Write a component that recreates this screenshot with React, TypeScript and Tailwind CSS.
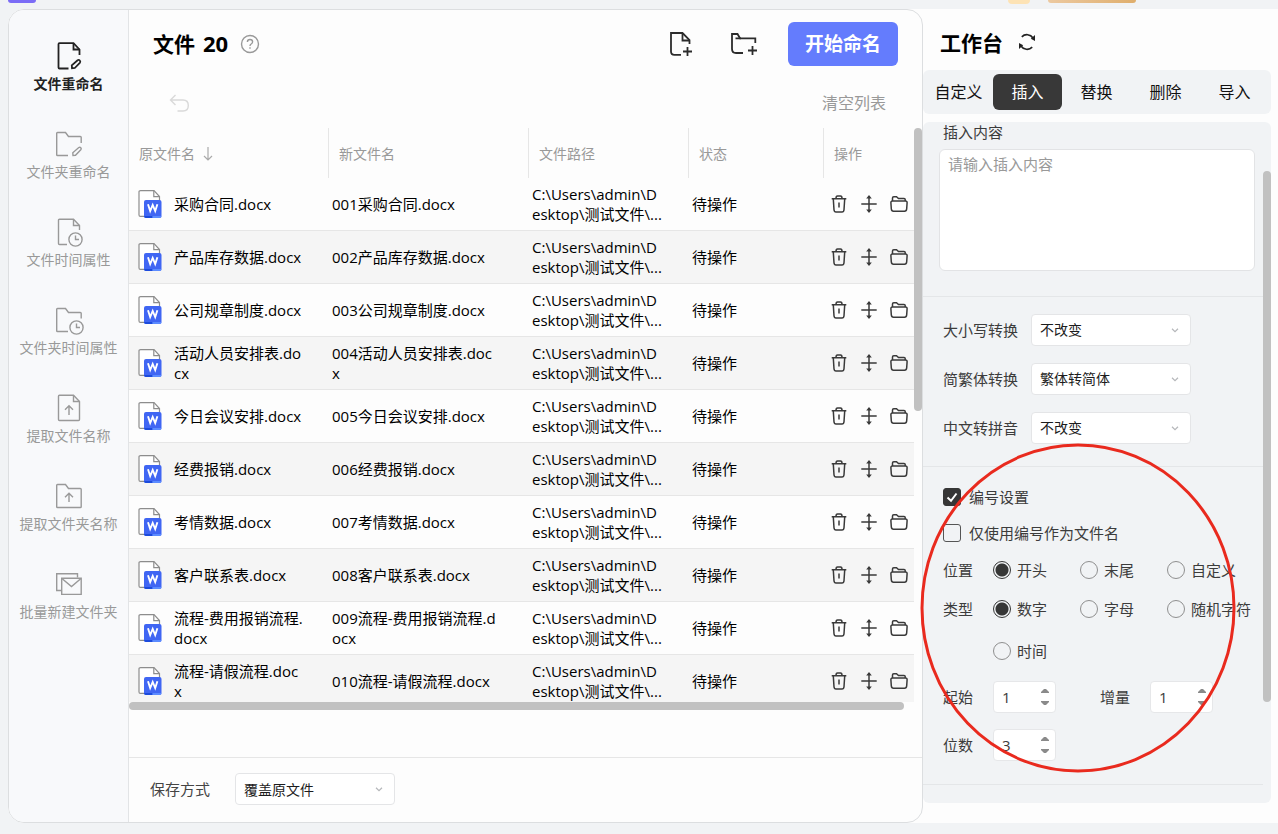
import { useState, type ReactNode } from "react";

const files = [
  "采购合同.docx",
  "产品库存数据.docx",
  "公司规章制度.docx",
  "活动人员安排表.docx",
  "今日会议安排.docx",
  "经费报销.docx",
  "考情数据.docx",
  "客户联系表.docx",
  "流程-费用报销流程.docx",
  "流程-请假流程.docx",
];

const tabs = ["自定义", "插入", "替换", "删除", "导入"];

function NavSvg({ children, bold }: { children: ReactNode; bold?: boolean }) {
  return (
    <svg className="h-8 w-8" viewBox="0 0 32 32" fill="none" stroke="currentColor" strokeWidth={bold ? 1.8 : 1.4}>
      {children}
    </svg>
  );
}

const navItems: { label: string; icon: ReactNode }[] = [
  {
    label: "文件重命名",
    icon: (
      <>
        <path d="M15.5 28.5H6.5C5.8 28.5 5.5 28.1 5.5 27.5V4.2c0-.6.3-1 1-1H20.5L26.5 9.5V15" />
        <path d="M20.5 3.5V9.5H26.5" />
        <path d="M19 28.3L18.8 25.3 24.6 20.2Q25.8 19.4 26.8 20.5 27.8 21.7 26.8 22.8L21.8 28z" />
      </>
    ),
  },
  {
    label: "文件夹重命名",
    icon: (
      <>
        <path d="M15 27.5H4.5Q3.7 27.5 3.7 26.7V5.3Q3.7 4.5 4.5 4.5H12.5L15.5 8.5H27.3Q28.2 8.5 28.2 9.3V15" />
        <path d="M20 27.5L19.8 24.7 25.8 19.5Q26.9 18.8 27.8 19.7 28.7 20.8 27.8 21.8L22.5 27.3z" />
      </>
    ),
  },
  {
    label: "文件时间属性",
    icon: (
      <>
        <path d="M14 28.5H6.5C5.8 28.5 5.5 28.1 5.5 27.5V4.2c0-.6.3-1 1-1H20.5L26.5 9.5V14" />
        <path d="M20.5 3.5V9.5H26.5" />
        <circle cx="22.5" cy="23.5" r="6.6" />
        <path d="M22.5 19.5V23.5H26" />
      </>
    ),
  },
  {
    label: "文件夹时间属性",
    icon: (
      <>
        <path d="M15 27.5H4.5Q3.7 27.5 3.7 26.7V5.3Q3.7 4.5 4.5 4.5H12.5L15.5 8.5H27.3Q28.2 8.5 28.2 9.3V14.5" />
        <circle cx="23.5" cy="23.5" r="6.6" />
        <path d="M23.5 19.5V23.5H27" />
      </>
    ),
  },
  {
    label: "提取文件名称",
    icon: (
      <>
        <path d="M20.5 3.2H6.5C5.8 3.2 5.5 3.6 5.5 4.2V27.5c0 .6.3 1 1 1H25.5c.7 0 1-.4 1-1V9.5z" />
        <path d="M20.5 3.5V9.5H26.5M16 23V14M12 17.8L16 13.8 20 17.8" />
      </>
    ),
  },
  {
    label: "提取文件夹名称",
    icon: (
      <>
        <path d="M4.5 27.5Q3.7 27.5 3.7 26.7V5.3Q3.7 4.5 4.5 4.5H12.5L15.5 8.5H27.3Q28.2 8.5 28.2 9.3V26.7Q28.2 27.5 27.3 27.5z" />
        <path d="M16 22V13.5M12 17.2L16 13.2 20 17.2" />
      </>
    ),
  },
  {
    label: "批量新建文件夹",
    icon: (
      <>
        <path d="M8.5 22.5H3.7V5.7H24.5V9.5" />
        <path d="M8.7 10.2H28.2V26.4H8.7z" />
        <path d="M8.9 10.5L18.5 18.5 28 10.5" />
      </>
    ),
  },
];

function WordIcon() {
  return (
    <svg className="h-7 w-6 shrink-0" viewBox="0 0 24 28" fill="none">
      <path d="M6 26.4H2.5Q1 26.4 1 25V1.8Q1 .6 2.5 .6H16L21.5 6.5V12" fill="#fff" stroke="#8d8d8d" strokeWidth="1.2" />
      <path d="M15.8 .8V6.7H21.5" stroke="#8d8d8d" strokeWidth="1.2" />
      <rect x="6" y="10" width="17.5" height="18" rx="2" fill="#4066f3" />
      <path d="M6 26H14.5V28H8Q6 28 6 26z" fill="#1c4bdc" />
      <path d="M14.5 26H23.5Q23.5 28 21.5 28H14.5z" fill="#5b8bff" />
      <path d="M10 14.2L12.2 21 14.7 15 17.2 21 19.4 14.2" stroke="#fff" strokeWidth="1.9" />
    </svg>
  );
}

function TrashIcon() {
  return (
    <svg className="h-5 w-5" viewBox="0 0 20 20" fill="none" stroke="#3a3a3a" strokeWidth="1.5">
      <path d="M2.7 4.7H17.3M7 4.5Q7 2 8.5 2H11.5Q13 2 13 4.5" />
      <path d="M4.3 5L5 15.8Q5.2 18 7 18H13Q14.8 18 15 15.8L15.7 5M10 8.5V13.5" />
    </svg>
  );
}

function MoveIcon() {
  return (
    <svg className="h-5 w-5" viewBox="0 0 20 20" fill="none" stroke="#3a3a3a" strokeWidth="1.5">
      <path d="M2.3 10H17.7M10 2V18" />
      <path d="M7.2 4.5L10 1 12.8 4.5zM7.2 15.5L10 19 12.8 15.5z" fill="#3a3a3a" stroke="none" />
    </svg>
  );
}

function OpenFolderIcon() {
  return (
    <svg className="h-5 w-5" viewBox="0 0 20 20" fill="none" stroke="#3a3a3a" strokeWidth="1.5">
      <path d="M3.5 7V4Q3.5 2.7 4.8 2.7H7.5L9.5 4.5H15Q16.2 4.5 16.2 5.5V7" />
      <path d="M3.5 7H16.5Q18.2 7 18.1 8.7L17.7 14.7Q17.5 17.2 15.5 17.2H4.5Q2.5 17.2 2.3 14.7L1.9 8.7Q1.8 7 3.5 7z" />
    </svg>
  );
}

function SelectBox({ id, options }: { id: string; options: string[] }) {
  return (
    <div className="relative w-40">
      <select
        id={id}
        className="h-8 w-full appearance-none rounded border border-[#e4e5e7] bg-white pl-2 pr-7 text-[14px] text-[#1c1c1c] outline-none"
      >
        {options.map((o) => (
          <option key={o}>{o}</option>
        ))}
      </select>
      <svg
        className="pointer-events-none absolute right-3 top-3 h-2 w-2"
        viewBox="0 0 8 8"
        fill="none"
        stroke="#b5b7ba"
        strokeWidth="1.2"
      >
        <path d="M1 2.8L4 5.6 7 2.8" />
      </svg>
    </div>
  );
}

function SelectRow({ id, label, options }: { id: string; label: string; options: string[] }) {
  return (
    <div className="flex items-center">
      <label htmlFor={id} className="w-[88px]">
        {label}
      </label>
      <SelectBox id={id} options={options} />
    </div>
  );
}

function Radio({ name, label, checked }: { name: string; label: string; checked?: boolean }) {
  return (
    <label className="flex w-[87px] shrink-0 items-center gap-1.5 whitespace-nowrap">
      <input
        type="radio"
        name={name}
        defaultChecked={checked}
        className="h-[18px] w-[18px] shrink-0 appearance-none rounded-full border border-[#8f8f8f] checked:border-[#363636] checked:bg-[radial-gradient(circle,#363636_6px,transparent_7px)]"
      />
      {label}
    </label>
  );
}

function Check({ label, checked }: { label: string; checked?: boolean }) {
  return (
    <label className="flex h-9 items-center gap-2">
      <span className="relative h-[18px] w-[18px]">
        <input
          type="checkbox"
          defaultChecked={checked}
          className="peer block h-[18px] w-[18px] appearance-none rounded-[3px] border border-[#555] checked:border-[#363636] checked:bg-[#363636]"
        />
        <svg
          className="pointer-events-none absolute inset-0 hidden h-[18px] w-[18px] peer-checked:block"
          viewBox="0 0 18 18"
          fill="none"
          stroke="#fff"
          strokeWidth="2"
        >
          <path d="M4.5 9.5L8 12.8 13.5 5.5" />
        </svg>
      </span>
      {label}
    </label>
  );
}

function NumberField({ id, label, initial }: { id: string; label: string; initial: number }) {
  const [value, setValue] = useState(initial);
  return (
    <div className="flex items-center">
      <label htmlFor={id} className="w-[50px]">
        {label}
      </label>
      <div className="flex h-8 w-[63px] items-center rounded border border-[#e6e7e9] bg-white pr-1.5">
        <input
          id={id}
          type="number"
          value={value}
          onChange={(e) => setValue(Number(e.target.value))}
          className="w-0 min-w-0 flex-1 bg-transparent pl-2 outline-none [appearance:textfield] [&::-webkit-inner-spin-button]:appearance-none"
        />
        <div className="flex flex-col gap-2">
          <button aria-label="增加" onClick={() => setValue(value + 1)}>
            <svg className="block h-1 w-2" viewBox="0 0 8 4" fill="#8a8a8a">
              <path d="M0 4L0 3 3 0H5L8 3V4z" />
            </svg>
          </button>
          <button aria-label="减少" onClick={() => setValue(value - 1)}>
            <svg className="block h-1 w-2" viewBox="0 0 8 4" fill="#8a8a8a">
              <path d="M0 0L0 1 3 4H5L8 1V0z" />
            </svg>
          </button>
        </div>
      </div>
    </div>
  );
}

function Sidebar() {
  return (
    <nav className="flex w-[120px] shrink-0 flex-col gap-8 border-r border-[#e2e4e6] bg-[#f8f9fb] pt-[30px]">
      {navItems.map((item, i) => (
        <button
          key={item.label}
          className={`flex h-14 flex-col items-center text-[14px] leading-6 ${
            i === 0 ? "font-bold text-[#222]" : "text-[#999]"
          }`}
        >
          <NavSvg bold={i === 0}>{item.icon}</NavSvg>
          {item.label}
        </button>
      ))}
    </nav>
  );
}

function FileTable() {
  const th = "border-l border-[#e6e6e6] pl-2.5 pt-0.5 text-left font-normal";
  return (
    <table className="w-full table-fixed border-separate border-spacing-0 text-[15px] leading-5">
      <colgroup>
        <col className="w-[199px]" />
        <col className="w-[200px]" />
        <col className="w-[160px]" />
        <col className="w-[135px]" />
        <col />
      </colgroup>
      <thead className="text-[14px] text-[#999]">
        <tr className="h-[50px]">
          <th className="pl-2.5 pt-0.5 text-left font-normal">
            <span className="flex items-center gap-2">
              原文件名
              <svg className="h-3.5 w-2.5" viewBox="0 0 10 14" fill="none" stroke="#aaa" strokeWidth="1.2">
                <path d="M5 0V13M1 9L5 13 9 9" />
              </svg>
            </span>
          </th>
          <th className={th}>新文件名</th>
          <th className={th}>文件路径</th>
          <th className={th}>状态</th>
          <th className={th}>操作</th>
        </tr>
      </thead>
      <tbody className="text-black">
        {files.map((name, i) => (
          <tr key={name} className="h-[53px] even:bg-[#f5f5f5] [&>td]:border-b [&>td]:border-[#e6e6e6]">
            <td>
              <div className="flex items-center gap-3 break-all pl-[9px] pr-6">
                <WordIcon />
                {name}
              </div>
            </td>
            <td className="break-all pl-1 pr-8">{String(i + 1).padStart(3, "0") + name}</td>
            <td className="pl-1">
              <span className="block">C:\Users\admin\D</span>
              <span className="block whitespace-nowrap">esktop\测试文件\...</span>
            </td>
            <td className="pl-1">待操作</td>
            <td>
              <div className="flex gap-2.5 pl-1.5">
                <button aria-label="删除">
                  <TrashIcon />
                </button>
                <button aria-label="移动">
                  <MoveIcon />
                </button>
                <button aria-label="打开文件夹">
                  <OpenFolderIcon />
                </button>
              </div>
            </td>
          </tr>
        ))}
      </tbody>
    </table>
  );
}

function FilePanel() {
  return (
    <section className="flex min-w-0 flex-1 flex-col">
      <header className="flex h-[68px] shrink-0 items-center pl-6 pr-6">
        <h1 className="flex items-baseline gap-2 text-[21px] font-bold text-black">
          文件 <span className="text-[22px]">20</span>
        </h1>
        <svg className="ml-3 h-5 w-5" viewBox="0 0 20 20" fill="none" stroke="#999" strokeWidth="1.4">
          <circle cx="10" cy="10" r="8.5" />
          <path d="M7.4 8Q7.4 5.5 10 5.5 12.6 5.5 12.6 7.8 12.6 9.2 11.2 10 10 10.7 10 12M10 13.2V14.7" />
        </svg>
        <button aria-label="添加文件" className="ml-auto mr-8">
          <svg className="h-7 w-7" viewBox="0 0 28 28" fill="none" stroke="#2c2c2c" strokeWidth="1.8">
            <path d="M13 24.8H6.5Q3 24.8 3 21.5V3H14.5L21.5 10V14" />
            <path d="M14.5 3V10.5H21.5M19.5 17V26M15 21.5H24" />
          </svg>
        </button>
        <button aria-label="添加文件夹" className="mr-7">
          <svg className="h-7 w-8" viewBox="0 0 32 28" fill="none" stroke="#2c2c2c" strokeWidth="1.8">
            <path d="M15 23H8Q4 23 4 19V4H9.5L12 8.3H27.3V13" />
            <path d="M7.5 8.3H13M24.5 16V25M20 20.5H29" />
          </svg>
        </button>
        <button className="h-11 w-[110px] rounded-md bg-[#647cfd] text-[19px] font-bold text-white">开始命名</button>
      </header>
      <div className="flex h-[50px] shrink-0 items-center justify-between pl-10 pr-9">
        <button aria-label="撤销">
          <svg className="h-5 w-5" viewBox="0 0 20 20" fill="none" stroke="#d9d9d9" strokeWidth="1.4">
            <path d="M6.5 2L1.5 7 6.5 12M2 7H14Q19.3 7 19.3 12.5 19.3 18 14 18H8.5" />
          </svg>
        </button>
        <button className="text-[16px] text-[#999]">清空列表</button>
      </div>
      <div className="flex min-h-0 flex-1 overflow-hidden">
        <div className="flex min-w-0 flex-1 flex-col">
          <div className="min-h-0 flex-1 overflow-hidden">
            <FileTable />
          </div>
          <div className="mr-2.5 h-2 shrink-0 rounded-full bg-[#c1c1c1]" />
        </div>
        <div className="h-[283px] w-2 shrink-0 rounded-full bg-[#c1c1c1]" />
      </div>
      <footer className="mt-[47px] flex h-[65px] shrink-0 items-center gap-[25px] border-t border-[#e6e6e6] pb-0.5 pl-[21px] text-[15px] text-[#444]">
        <label htmlFor="save-mode">保存方式</label>
        <SelectBox id="save-mode" options={["覆盖原文件", "另存为"]} />
      </footer>
    </section>
  );
}

function Workbench() {
  const [active, setActive] = useState("插入");
  return (
    <aside className="relative flex w-[355px] shrink-0 flex-col pb-5 pr-[7px]">
      <header className="flex h-[61px] shrink-0 items-center gap-3.5 pl-[17px] pt-2">
        <h2 className="text-[21px] font-bold text-black">工作台</h2>
        <button aria-label="重置" className="mb-1">
          <svg className="h-5 w-5" viewBox="0 0 20 20" fill="none" stroke="#222" strokeWidth="1.7">
            <path d="M4.8 4.8A7.3 7.3 0 0 1 16 6M15.2 15.2A7.3 7.3 0 0 1 4 14" />
            <path d="M18 3V9L13.8 6.7zM2 17V11L6.2 13.3z" fill="#222" stroke="none" />
          </svg>
        </button>
      </header>
      <div className="flex h-11 shrink-0 items-center rounded-md bg-[#f1f3f5] pl-px pr-0.5">
        {tabs.map((tab) => (
          <button
            key={tab}
            onClick={() => setActive(tab)}
            className={`h-9 flex-1 rounded-md text-[16px] ${active === tab ? "bg-[#383838] text-white" : "text-[#111]"}`}
          >
            {tab}
          </button>
        ))}
      </div>
      <div className="mt-2 flex min-h-0 flex-1 overflow-hidden rounded-md bg-[#f1f3f5] text-[15px] leading-5 text-[#3c3c3c]">
        <div className="min-w-0 flex-1">
          <div className="flex flex-col border-b border-[#e4e6e8] pb-[25px] pl-4 pr-2">
            <label htmlFor="insert-text" className="mb-[7px] ml-1">
              插入内容
            </label>
            <textarea
              id="insert-text"
              placeholder="请输入插入内容"
              className="h-[122px] resize-none rounded-md border border-[#e2e3e5] bg-white px-2 py-1 outline-none placeholder:text-[#999]"
            />
          </div>
          <div className="flex flex-col gap-[17px] border-b border-[#e4e6e8] pb-[22px] pl-5 pt-[17px]">
            <SelectRow id="case" label="大小写转换" options={["不改变", "全部大写", "全部小写"]} />
            <SelectRow id="hans" label="简繁体转换" options={["繁体转简体", "简体转繁体", "不改变"]} />
            <SelectRow id="pinyin" label="中文转拼音" options={["不改变", "转为拼音"]} />
          </div>
          <div className="border-b border-[#e4e6e8] pb-[23px] pl-5 pt-3">
            <Check label="编号设置" checked />
            <Check label="仅使用编号作为文件名" />
            <div className="flex h-[38px] items-center">
              <span className="w-[50px] shrink-0">位置</span>
              <Radio name="position" label="开头" checked />
              <Radio name="position" label="末尾" />
              <Radio name="position" label="自定义" />
            </div>
            <div className="flex pt-2.5">
              <span className="w-[50px] shrink-0">类型</span>
              <div className="flex flex-1 flex-wrap gap-y-[22px]">
                <Radio name="kind" label="数字" checked />
                <Radio name="kind" label="字母" />
                <Radio name="kind" label="随机字符" />
                <Radio name="kind" label="时间" />
              </div>
            </div>
            <div className="mt-5 flex flex-wrap gap-x-11 gap-y-4">
              <NumberField id="start" label="起始" initial={1} />
              <NumberField id="step" label="增量" initial={1} />
              <NumberField id="digits" label="位数" initial={3} />
            </div>
          </div>
        </div>
        <div className="mt-[49px] h-[531px] w-2 shrink-0 rounded-full bg-[#c1c1c1]" />
      </div>
      <svg
        className="pointer-events-none absolute -left-1 top-[434px] h-[330px] w-[320px]"
        viewBox="0 0 320 330"
        fill="none"
        stroke="#e92a1e"
        strokeWidth="3"
      >
        <ellipse cx="159" cy="165" rx="156" ry="163" />
      </svg>
    </aside>
  );
}

export default function App() {
  return (
    <div className="flex h-screen flex-col overflow-hidden bg-[#f1f3f5] pb-[11px] font-['Open_Sans','Noto_Sans_CJK_SC',sans-serif]">
      <div className="flex h-[9px] shrink-0 items-start pl-2">
        <span className="h-[3px] w-7 rounded-b bg-[#7b6cf6]" />
        <span className="ml-auto mr-[18px] h-1 w-[22px] rounded-b-full bg-[#fde3b5]" />
        <span className="mr-[142px] h-[3px] w-[88px] rounded-b-full bg-linear-to-r from-[#ecc9a0] to-[#dfae6c]" />
      </div>
      <main className="ml-2 flex min-h-0 flex-1 rounded-l-2xl bg-[#fdfdfd]">
        <div className="flex min-w-0 flex-1 overflow-hidden rounded-2xl border border-[#dcdee0]">
          <Sidebar />
          <FilePanel />
        </div>
        <Workbench />
      </main>
    </div>
  );
}
